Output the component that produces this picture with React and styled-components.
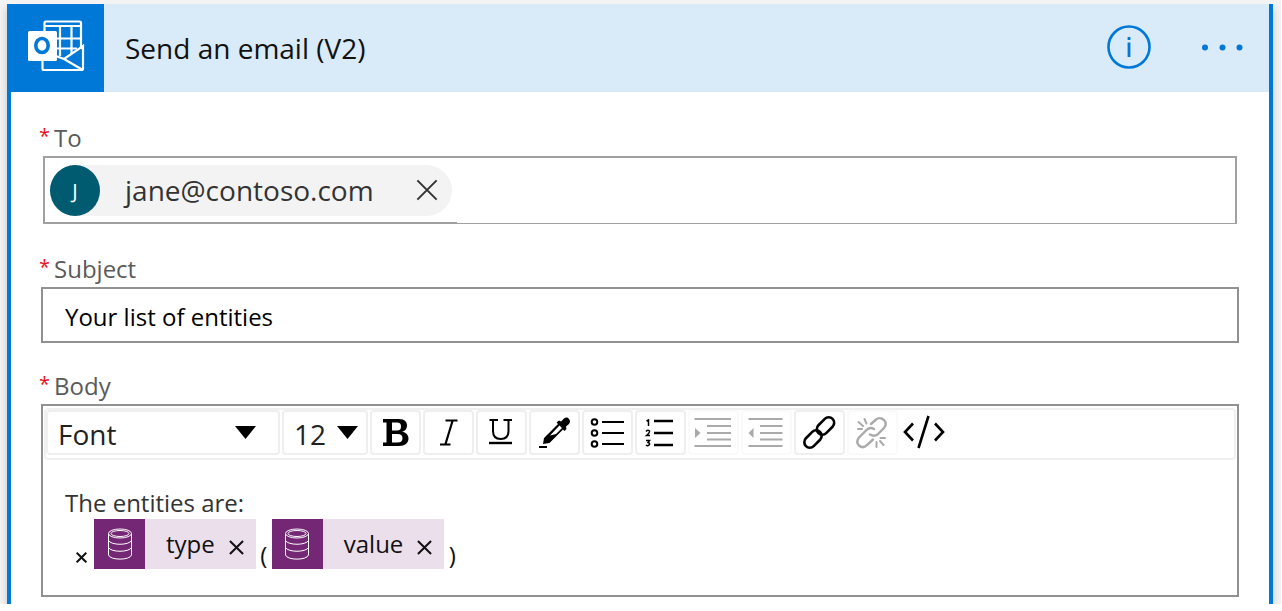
import React from "react";
import styled, { createGlobalStyle, css } from "styled-components";

const Global = createGlobalStyle`
  *, *::before, *::after { box-sizing: border-box; }
  body { margin: 0; background: #fff; color: #222; font-family: "Open Sans", "Noto Sans", sans-serif; }
  button, input, select { font: inherit; color: inherit; margin: 0; }
`;

const Stage = styled.div`
  margin-right: 1px;
  padding: 4px 8px 0 7px;
  background: #f3f3f3;
`;

const Card = styled.main`
  background: #fff;
  border: solid #0078d7;
  border-width: 0 4px;
  box-shadow: 0 4px 8px rgba(0, 0, 0, 0.2);
  clip-path: inset(0 -8px 0 -8px);
`;

const Header = styled.header`
  display: flex;
  align-items: center;
  height: 88px;
  padding-right: 24px;
  background: #d9eaf8;
`;

const Tile = styled.div`
  display: flex;
  align-items: center;
  width: 93px;
  height: 88px;
  background: #0078d7;
`;

const Title = styled.h1`
  flex: 1;
  margin: 0;
  padding-left: 21px;
  font-size: 28px;
  line-height: 36px;
  font-weight: 400;
  color: #111;
`;

const HeaderButton = styled.button`
  display: flex;
  padding: 0 0 3px;
  border: 0;
  background: none;
  margin-left: ${(p) => (p.$gap ? "48px" : "0")};
`;

const Form = styled.form`
  padding: 30px 30px 7px 30px;
`;

const Label = styled.label`
  display: flex;
  gap: 4px;
  height: 34px;
  font-size: 24px;
  line-height: 32px;
  color: #5a5a5a;
  &::before { content: "*"; color: #e81123; font-size: 20px; line-height: 28px; margin-left: -2px; }
`;

const Recipients = styled.div`
  display: flex;
  height: 68px;
  margin: 0 2px 29px;
  border: 2px solid #a0a0a0;
  border-bottom-width: 1px;
`;

const RecipientList = styled.div`
  display: flex;
  align-items: center;
  padding: 0 5px;
  border-bottom: 1px solid #a0a0a0;
`;

const Chip = styled.div`
  display: flex;
  align-items: center;
  height: 51px;
  padding-right: 14px;
  border-radius: 26px;
  background: #f3f3f3;
  font-size: 28px;
  color: #333;
`;

const Avatar = styled.span`
  width: 50px;
  line-height: 51px;
  margin-right: 25px;
  border-radius: 50%;
  background: #005b70;
  color: #fff;
  font-size: 20px;
  text-align: center;
`;

const ChipRemove = styled.button`
  display: flex;
  margin-left: 42px;
  padding: 0;
  border: 0;
  background: none;
`;

const RecipientInput = styled.input`
  flex: 1;
  min-width: 0;
  border: 0;
  outline: 0;
  background: none;
`;

const Subject = styled.input`
  display: block;
  width: 100%;
  height: 56px;
  margin-bottom: 27px;
  padding: 2px 22px 0;
  border: 2px solid #919191;
  font-size: 24px;
  color: #000;
`;

const Editor = styled.section`
  height: 193px;
  border: 2px solid #919191;
`;

const Toolbar = styled.div`
  display: flex;
  height: 52px;
  margin: 2px 1px 0;
  gap: 2px;
  border: 2px solid #f0f0f0;
  border-radius: 4px;
`;

const frame = css`
  height: 45px;
  border: 2px solid ${(p) => (p.$plain ? "transparent" : p.disabled ? "#fafafa" : "#efefef")};
  border-radius: 4px;
  background: #fff;
`;

const Picker = styled.div`
  ${frame}
  display: grid;
  width: ${(p) => p.$width};
  > * { grid-area: 1 / 1; }
  > svg { align-self: center; justify-self: end; margin-right: ${(p) => p.$inset}; pointer-events: none; }
`;

const Select = styled.select`
  appearance: none;
  width: 100%;
  padding: 2px 0 0 10px;
  border: 0;
  background: none;
  font-size: 28px;
  color: #222;
`;

const Tool = styled.button`
  ${frame}
  display: flex;
  align-items: center;
  justify-content: center;
  width: 51px;
  padding: 0;
  color: ${(p) => (p.disabled ? "#aaa" : "#000")};
`;

const Content = styled.div`
  padding: 27px 22px 0;
  font-size: 24px;
  line-height: 32px;
  color: #333;
`;

const Line = styled.p`
  display: flex;
  align-items: flex-end;
  margin: 0;
  padding-left: ${(p) => (p.$indent ? "11px" : "0")};
  color: ${(p) => (p.$indent ? "#111" : "#333")};
`;

const Token = styled.span`
  display: flex;
  align-items: center;
  height: 50px;
  padding-right: 12px;
  background: #ebdfeb;
  color: #111;
`;

const TokenIcon = styled.span`
  display: flex;
  align-items: center;
  justify-content: center;
  width: 51px;
  height: 50px;
  margin-right: 21px;
  background: #742774;
`;

const Remove = styled.button`
  display: flex;
  padding: ${(p) => (p.$inToken ? "6px 0 0" : "0 7px 6px 0")};
  margin-left: ${(p) => (p.$inToken ? "14px" : "0")};
  border: 0;
  background: none;
`;

const Paren = styled.span`
  width: 16px;
  text-align: center;
  line-height: 28px;
`;

const Cross = ({ size, stroke = 2, color = "#111" }) => (
  <svg width={size} height={size} viewBox="0 0 16 16" fill="none" stroke={color} strokeWidth={(stroke * 16) / size}>
    <path d="M1 1L15 15M15 1L1 15" />
  </svg>
);

const Outlook = () => (
  <svg width="93" height="88" viewBox="11 4 93 88" fill="none" stroke="#fff" strokeWidth="2.200">
    <path d="M44.500 31V23Q44.500 21.500 46 21.500H79.500Q81 21.500 81 23V48" />
    <path d="M45 26H81M56 38.500H81M56 48.500H77M60 26V56M71.500 26V54" />
    <path d="M42.500 61V68.500Q42.500 70 44 70H81.500Q83 70 83 68.500V46L64 59L56 56M64 59L82 69.500" />
    <path d="M79 49L84 44V49Z" fill="#fff" stroke="none" />
    <rect x="28" y="31" width="29" height="30" rx="1.500" fill="#fff" stroke="none" />
    <ellipse cx="42" cy="45.500" rx="6.200" ry="7" stroke="#0078d7" strokeWidth="3.600" />
  </svg>
);

const Info = () => (
  <svg width="44" height="44" viewBox="0 0 44 44" fill="none" stroke="#0078d7">
    <circle cx="22" cy="22" r="20.500" strokeWidth="2.600" />
    <path d="M22 17.500V32M22 12V15" strokeWidth="2.800" />
  </svg>
);

const Dots = () => (
  <svg width="46" height="8" viewBox="0 0 46 8" fill="#0078d7">
    <circle cx="6" cy="4.500" r="3" /><circle cx="23.500" cy="4.500" r="3" /><circle cx="40.500" cy="4.500" r="3" />
  </svg>
);

const Caret = () => (
  <svg width="21" height="13" viewBox="0 0 21 13"><path d="M0 0H21L10.500 13Z" /></svg>
);

const Icon = ({ children, ...rest }) => (
  <svg width="47" height="40" viewBox="0 0 47 40" fill="none" stroke="currentColor" strokeWidth="2" {...rest}>
    {children}
  </svg>
);

const Bold = () => (
  <Icon fill="currentColor" stroke="none" fillRule="evenodd">
    <path d="M11 6H27C33 6 35 9 35 12.500C35 16 33 18 30 18.800C34 19.500 36.500 22 36.500 25.500C36.500 30 33 33 27 33H11V29.500H14.500V9.500H11ZM20 9.500V17.500H25C28 17.500 29 16 29 13.500C29 11 28 9.500 25 9.500ZM20 21V29.500H25.500C29 29.500 30.500 28 30.500 25.200C30.500 22.500 29 21 25.500 21Z" />
  </Icon>
);
const Italic = () => <Icon><path d="M20.500 7.500H32.500M15 31.500H25.500M27.500 8L20.500 31" strokeWidth="2.200" /></Icon>;
const Underline = () => (
  <Icon><path d="M11.500 7H20M25.500 7H34M15 7V18Q15 26 22.700 26Q30.500 26 30.500 18V7" /><path d="M11 30H34" strokeWidth="2.400" /></Icon>
);
const Dropper = () => (
  <Icon fill="currentColor" stroke="none">
    <path d="M8 33H16V35H8Z" />
    <path fillRule="evenodd" d="M12 31L13 25L27 11L25.500 9.500L28 7.500L30 8.500L33 5.500Q36 3.500 38 6Q40 8.500 38 11L35 13.500L35.500 16L33.500 18L32 16.500L18.500 30ZM19 22.500L25 21L31 15L28.500 12.500Z" />
  </Icon>
);
const Bullets = () => (
  <Icon>
    <circle cx="10.500" cy="9" r="2.800" /><circle cx="10.500" cy="20" r="2.800" /><circle cx="10.500" cy="31" r="2.800" />
    <path d="M18 9H40M18 20H40M18 31H40" />
  </Icon>
);
const Numbers = () => (
  <Icon>
    <path d="M17 8H36M17 20H36M17 32H36" strokeWidth="2.600" />
    <path d="M9.500 8L11.500 7V13M9 18.500Q11 16.500 12.500 18Q13 19.500 9.500 22.500H13M9 27.500H12.500L11 29.500Q13 30 12.500 31.500Q11 33.500 9 32" strokeWidth="1.500" />
  </Icon>
);
const Indent = () => (
  <Icon>
    <path d="M4.500 6H41M17 13H41M17 20H41M17 26.500H41M4.500 33H41" />
    <path d="M5 15V25L10.500 20Z" fill="currentColor" stroke="none" />
  </Icon>
);
const Outdent = () => (
  <Icon>
    <path d="M5.500 6H39.500M17 13H39.500M17 20H39.500M17 26.500H39.500M5.500 33H39.500" />
    <path d="M10.500 15V25L5.500 20Z" fill="currentColor" stroke="none" />
  </Icon>
);
const Link = () => (
  <Icon strokeWidth="2.600" strokeLinecap="round">
    <rect x="-10" y="-5.500" width="20" height="11" rx="5.500" transform="translate(29.500 13) rotate(-45)" />
    <rect x="-10" y="-5.500" width="20" height="11" rx="5.500" transform="translate(17 26) rotate(-45)" />
  </Icon>
);
const Unlink = () => (
  <Icon>
    <g strokeWidth="2.400" strokeLinecap="round">
      <path d="M22 11L27 6.500Q31 3.500 35 7Q38.500 11 35 15L28.500 21.500Q25 24 21 21.500" />
      <path d="M25 16Q21 13.500 17.500 17L10 24.500Q6.500 29 10 32.500Q14 36 18 32L24 26.500" />
      <path d="M15.500 6L17.500 10.500M9.500 9L14 13M9 16H13M27.500 29V34M31 28L34.500 32M31.500 25H36" strokeWidth="2" />
    </g>
  </Icon>
);
const Code = () => (
  <Icon strokeWidth="2.600"><path d="M11 10.500L3 19L11 27.500M33 10.500L41 19L33 27.500M26.500 3L16.500 35" /></Icon>
);

const Database = () => (
  <svg width="26" height="32" viewBox="0 0 26 32" fill="none" stroke="#fff" strokeWidth="1">
    <ellipse cx="13" cy="5.500" rx="11.500" ry="4.500" /><ellipse cx="13" cy="5.500" rx="9" ry="3" />
    <path d="M1.500 6V27C3 32.500 23 32.500 24.500 27V6M1.500 12.500C4 17.500 22 17.500 24.500 12.500M1.500 19.500C4 24.500 22 24.500 24.500 19.500" />
  </svg>
);

const tools = [
  ["Bold", Bold], ["Italic", Italic], ["Underline", Underline], ["Text color", Dropper],
  ["Bulleted list", Bullets], ["Numbered list", Numbers],
  ["Indent", Indent, { disabled: true }], ["Outdent", Outdent, { disabled: true }],
  ["Insert link", Link], ["Remove link", Unlink, { disabled: true }], ["Code view", Code, { $plain: true }],
];

const DynamicToken = ({ name }) => (
  <Token>
    <TokenIcon><Database /></TokenIcon>
    {name}
    <Remove type="button" $inToken aria-label={`Remove ${name}`}><Cross size={15} /></Remove>
  </Token>
);

export default function App() {
  return (
    <>
      <Global />
      <Stage>
        <Card>
          <Header>
            <Tile><Outlook /></Tile>
            <Title>Send an email (V2)</Title>
            <HeaderButton type="button" aria-label="Information"><Info /></HeaderButton>
            <HeaderButton type="button" $gap aria-label="More options"><Dots /></HeaderButton>
          </Header>
          <Form>
            <Label htmlFor="to">To</Label>
            <Recipients>
              <RecipientList>
                <Chip>
                  <Avatar>J</Avatar>
                  jane@contoso.com
                  <ChipRemove type="button" aria-label="Remove recipient"><Cross size={22} color="#333" /></ChipRemove>
                </Chip>
              </RecipientList>
              <RecipientInput id="to" />
            </Recipients>
            <Label htmlFor="subject">Subject</Label>
            <Subject id="subject" defaultValue="Your list of entities" />
            <Label as="div" id="body-label">Body</Label>
            <Editor aria-labelledby="body-label">
              <Toolbar role="toolbar">
                <Picker $width="234px" $inset="22px">
                  <Select aria-label="Font"><option>Font</option></Select><Caret />
                </Picker>
                <Picker $width="86px" $inset="8px">
                  <Select aria-label="Font size"><option>12</option></Select><Caret />
                </Picker>
                {tools.map(([name, Glyph, props]) => (
                  <Tool key={name} type="button" aria-label={name} {...props}><Glyph /></Tool>
                ))}
              </Toolbar>
              <Content>
                <Line>The entities are:</Line>
                <Line $indent>
                  <Remove type="button" aria-label="Remove item"><Cross size={11} /></Remove>
                  <DynamicToken name="type" />
                  <Paren>(</Paren>
                  <DynamicToken name="value" />
                  <Paren>)</Paren>
                </Line>
              </Content>
            </Editor>
          </Form>
        </Card>
      </Stage>
    </>
  );
}
